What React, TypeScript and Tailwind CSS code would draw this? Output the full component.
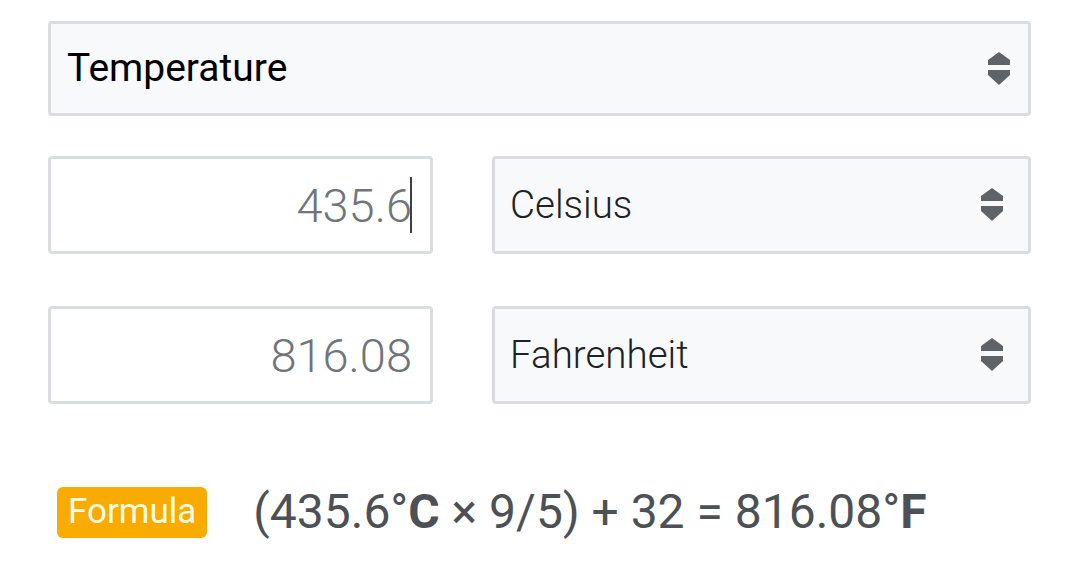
import React from "react";

function Arrows({ className }: { className: string }) {
  return (
    <svg className={className} width="22" height="34" viewBox="0 0 22 34" fill="#5f6368">
      <path d="M11 0 L22 8 L22 13 L0 13 L0 8 Z" />
      <path d="M0 18 L22 18 L22 23 L11 33 L0 23 Z" />
    </svg>
  );
}

function UnitSelect({ label }: { label: string }) {
  return (
    <div className="flex-1 h-[98px] flex items-center justify-between pl-[15px] pr-[25px] bg-[#f8f9fa] border-[3px] border-[#dadce0] rounded-[4px]">
      <span className="text-[38.5px] font-light text-[#202124]">{label}</span>
      <Arrows className="shrink-0" />
    </div>
  );
}

function NumberBox({ value, caret }: { value: string; caret?: boolean }) {
  return (
    <div className="w-[385px] h-[98px] flex items-center justify-end pr-[18px] bg-white border-[3px] border-[#dadce0] rounded-[4px]">
      <span className="text-[47px] font-light text-[#70757a] leading-none">{value}</span>
      {caret && <span className="w-[2px] h-[56px] bg-[#3c4043] -ml-[2px]" />}
    </div>
  );
}

export default function App() {
  return (
    <div
      className="w-[1080px] h-[566px] bg-white pl-[48px] pr-[49px] pt-[21px]"
      style={{ fontFamily: "Roboto, 'Liberation Sans', sans-serif" }}
    >
      <div className="h-[95px] flex items-center justify-between pl-[16px] pr-[18px] bg-[#f8f9fa] border-[3px] border-[#dadce0] rounded-[4px]">
        <span className="text-[39px] text-[#000]">Temperature</span>
        <Arrows className="shrink-0" />
      </div>

      <div className="mt-[40px] flex gap-[59px]">
        <NumberBox value="435.6" caret />
        <UnitSelect label="Celsius" />
      </div>

      <div className="mt-[52px] flex gap-[59px]">
        <NumberBox value="816.08" />
        <UnitSelect label="Fahrenheit" />
      </div>

      <div className="mt-[72px] flex items-center pl-[9px] gap-[46px]">
        <span className="h-[51px] px-[11px] flex items-center rounded-[6px] bg-[#f9ab00] text-[35px] text-[#fffbe6]">
          Formula
        </span>
        <span className="text-[48px] text-[#4d5156]">
          (435.6°<b className="font-bold">C</b> × 9/5) + 32 = 816.08°<b className="font-bold">F</b>
        </span>
      </div>
    </div>
  );
}
